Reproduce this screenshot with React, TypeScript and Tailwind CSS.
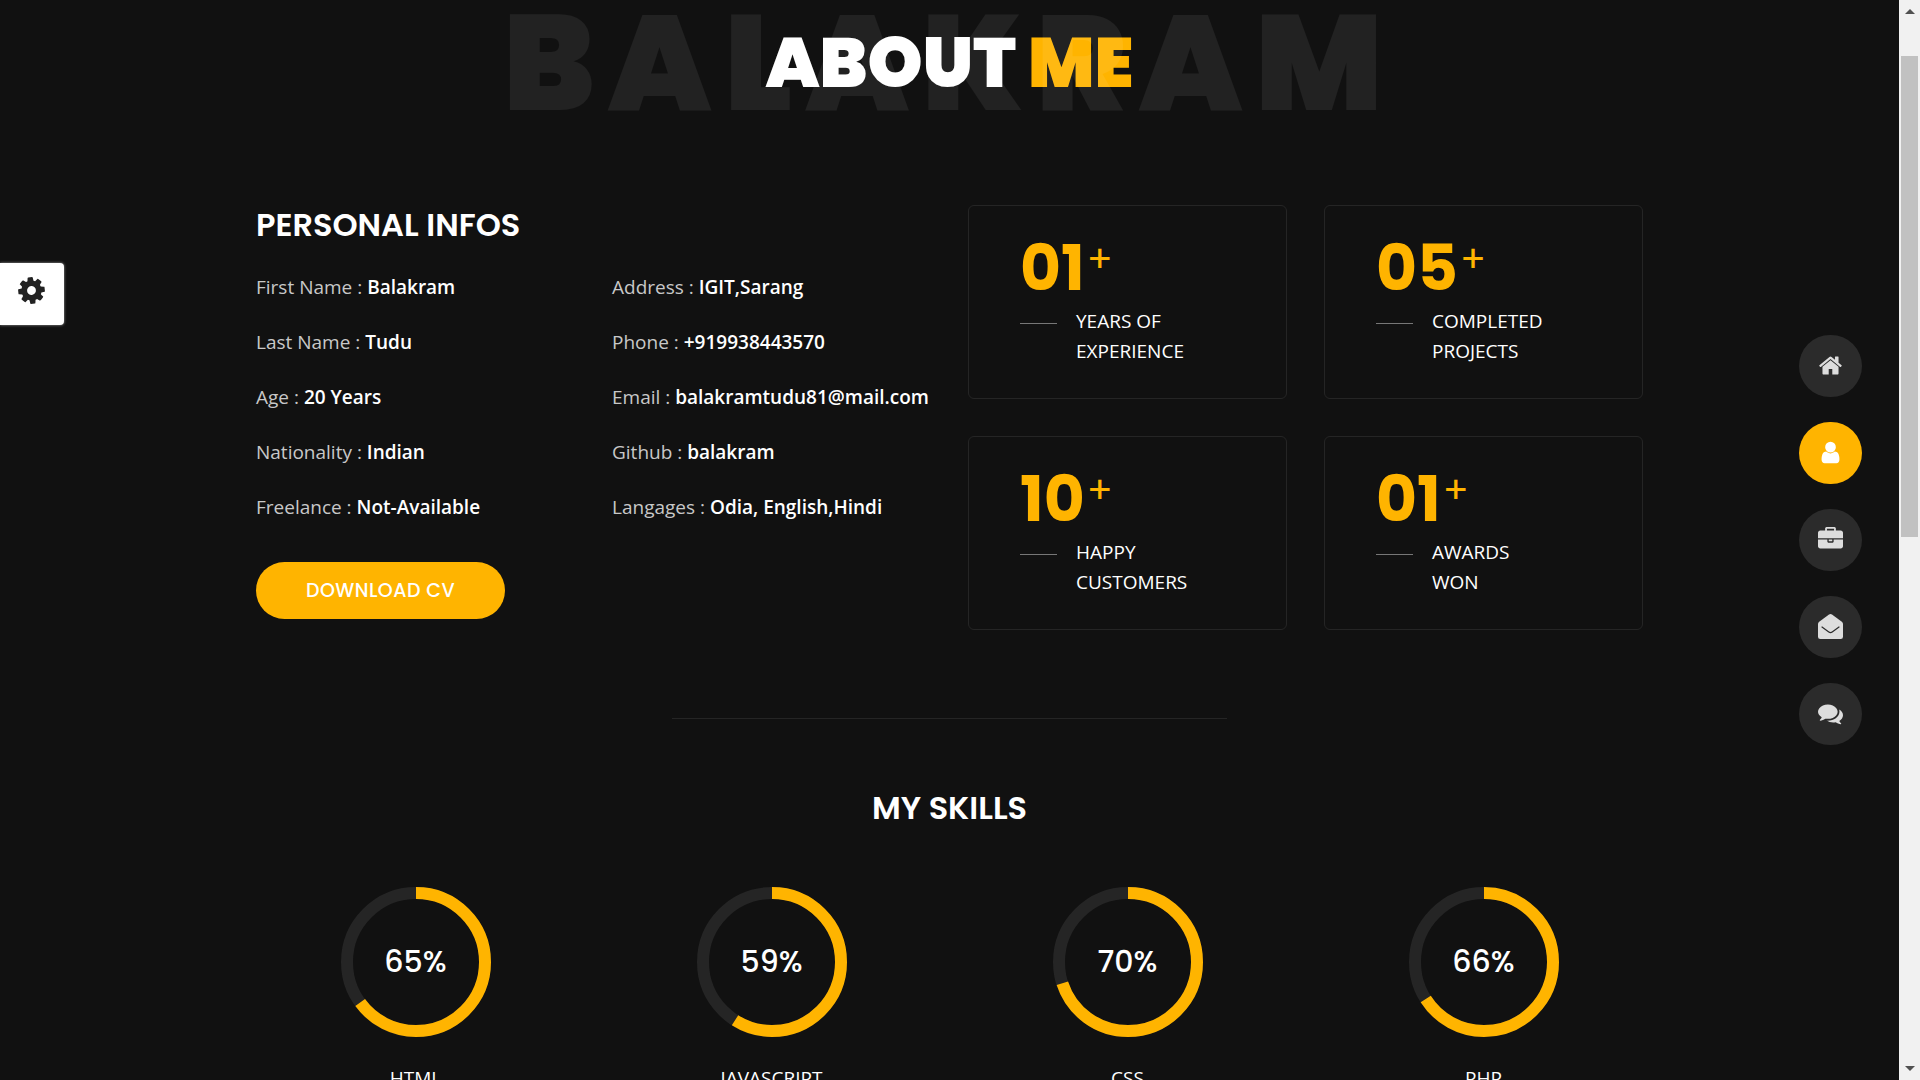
import React from "react";

const HEADING = "font-['Poppins','Inter',sans-serif]";

const ICONS = {
  home: "M1472 992v480q0 26-19 45t-45 19h-384v-384h-256v384h-384q-26 0-45-19t-19-45v-480q0-1 .5-3t.5-3l575-474 575 474q1 2 1 6zm223-69l-62 74q-8 9-21 11h-3q-13 0-21-7l-692-577-692 577q-12 8-24 7-13-2-21-11l-62-74q-8-10-7-23.5t11-21.5l719-599q32-26 76-26t76 26l244 204v-195q0-14 9-23t23-9h192q14 0 23 9t9 23v408l219 182q10 8 11 21.5t-7 23.5z",
  user: "M1536 1399q0 109-62.5 187t-150.5 78h-854q-88 0-150.5-78t-62.5-187q0-85 8.5-160.5t31.5-152 58.5-131 94-89 134.5-34.5q131 128 313 128t313-128q76 0 134.5 34.5t94 89 58.5 131 31.5 152 8.5 160.5zm-256-887q0 159-112.5 271.5t-271.5 112.5-271.5-112.5-112.5-271.5 112.5-271.5 271.5-112.5 271.5 112.5 112.5 271.5z",
  briefcase: "M640 256h512v-128h-512v128zm1152 640v480q0 66-47 113t-113 47h-1472q-66 0-113-47t-47-113v-480h672v160q0 26 19 45t45 19h320q26 0 45-19t19-45v-160h672zm-768 0v128h-256v-128h256zm768-480v384h-1792v-384q0-66 47-113t113-47h352v-160q0-40 28-68t68-28h576q40 0 68 28t28 68v160h352q66 0 113 47t47 113z",
  comments: "M1408 768q0 139-94 257t-256.500 186.500-353.500 68.500q-86 0-176-16-124 88-278 128-36 9-86 16h-3q-11 0-20.500-8t-11.500-21q-1-3-1-6.500t.5-6.500 2-6l2.500-5 3.500-5.500 4-5 4.500-5 4-4.500q5-6 23-25t26-29.500 22.500-29 25-38.500 20.500-44q-124-72-195-177t-71-224q0-139 94-257t256.500-186.500 353.500-68.500 353.500 68.500 256.500 186.500 94 257zm384 256q0 120-71 224.500t-195 176.500q10 24 20.500 44t25 38.500 22.500 29 26 29.500 23 25q1 1 4 4.500t4.500 5 4 5 3.500 5.500l2.500 5 2 6 .5 6.500-1 6.500q-3 14-13 22t-22 7q-50-7-86-16-154-40-278-128-90 16-176 16-271 0-472-132 58 4 88 4 161 0 309-45t264-129q125-92 192-212t67-254q0-77-23-152 129 71 204 178t75 230z",
  cog: "M1152 896q0-106-75-181t-181-75-181 75-75 181 75 181 181 75 181-75 75-181zm512-109v222q0 12-8 23t-20 13l-185 28q-19 54-39 91 35 50 107 138 10 12 10 25t-9 23q-27 37-99 108t-94 71q-12 0-26-9l-138-108q-44 23-91 38-16 136-29 186-7 28-36 28h-222q-14 0-24.500-8.500t-11.500-21.500l-28-184q-49-16-90-37l-141 107q-10 9-25 9-14 0-25-11-126-114-165-168-7-10-7-23 0-12 8-23 15-21 51-66.500t54-70.500q-27-50-41-99l-183-27q-13-2-21-12.500t-8-23.500v-222q0-12 8-23t19-13l186-28q14-46 39-92-40-57-107-138-10-12-10-24 0-10 9-23 26-36 98.500-107.500t94.500-71.500q13 0 26 10l138 107q44-23 91-38 16-136 29-186 7-28 36-28h222q14 0 24.500 8.500t11.500 21.500l28 184q49 16 90 37l142-107q9-9 24-9 13 0 25 10 129 119 165 170 7 8 7 22 0 12-8 23-15 21-51 66.500t-54 70.500q26 50 41 98l183 28q13 2 21 12.500t8 23.500z",
};

type IconName = keyof typeof ICONS | "envelope";

function Icon({ name, className }: { name: IconName; className: string }) {
  if (name === "envelope") {
    return (
      <svg viewBox="0 0 25 25" className={className} aria-hidden="true">
        <path
          fill="currentColor"
          d="M11 .6q1.500-1 3 0l9.800 7.200q1.200.9 1.200 2.200v12.700q0 2.300-2.300 2.300H2.300Q0 25 0 22.700V10q0-1.300 1.200-2.200z"
        />
        <path
          fill="none"
          stroke="#2b2b2b"
          strokeWidth="1.200"
          strokeLinecap="round"
          strokeLinejoin="round"
          d="M4 13l6.800 5q1.700 1.200 3.400 0L21 13"
        />
      </svg>
    );
  }
  return (
    <svg viewBox="0 0 1792 1792" className={className} fill="currentColor" aria-hidden="true">
      <path d={ICONS[name]} />
    </svg>
  );
}

const INFO_LEFT = [
  ["First Name", "Balakram"],
  ["Last Name", "Tudu"],
  ["Age", "20 Years"],
  ["Nationality", "Indian"],
  ["Freelance", "Not-Available"],
];

const INFO_RIGHT = [
  ["Address", "IGIT,Sarang"],
  ["Phone", "+919938443570"],
  ["Email", "balakramtudu81@mail.com"],
  ["Github", "balakram"],
  ["Langages", "Odia, English,Hindi"],
];

const STATS = [
  { value: "01", lines: ["Years of", "Experience"] },
  { value: "05", lines: ["Completed", "Projects"] },
  { value: "10", lines: ["Happy", "Customers"] },
  { value: "01", lines: ["Awards", "Won"] },
];

const SKILLS = [
  { name: "HTML", percent: 65 },
  { name: "JavaScript", percent: 59 },
  { name: "CSS", percent: 70 },
  { name: "PHP", percent: 66 },
];

const NAV: { label: string; icon: IconName; active?: boolean }[] = [
  { label: "Home", icon: "home" },
  { label: "About", icon: "user", active: true },
  { label: "Portfolio", icon: "briefcase" },
  { label: "Contact", icon: "envelope" },
  { label: "Blog", icon: "comments" },
];

function InfoList({ items }: { items: string[][] }) {
  return (
    <ul className="flex flex-col gap-[25px]">
      {items.map(([label, value]) => (
        <li key={label} className="whitespace-nowrap text-[19px] leading-[30px]">
          <span className="text-[#c8c8c8]">{label} : </span>
          <span className="font-semibold text-white">{value}</span>
        </li>
      ))}
    </ul>
  );
}

function StatCard({ value, lines }: { value: string; lines: string[] }) {
  return (
    <div className="rounded-md border border-[#252525] px-[51px] pt-[25px] pb-8">
      <div className={`${HEADING} flex items-start gap-[2px] text-[#ffb400]`}>
        <span className="text-[63px] leading-[75px] font-bold">{value}</span>
        <span className="text-[38px] leading-[55px] font-normal">+</span>
      </div>
      <div className="flex gap-[19px]">
        <span className="mt-[17px] h-px w-[37px] bg-[#777]" />
        <p className="text-[19px] leading-[30px] text-white uppercase">
          {lines[0]}
          <br />
          {lines[1]}
        </p>
      </div>
    </div>
  );
}

function SkillRing({ name, percent }: { name: string; percent: number }) {
  return (
    <div className="flex flex-col items-center gap-[26px]">
      <div className="grid place-items-center">
        <svg viewBox="0 0 150 150" className="col-start-1 row-start-1 size-[150px] -rotate-90" fill="none" strokeWidth="12" aria-hidden="true">
          <circle cx="75" cy="75" r="69" stroke="#252525" />
          <circle cx="75" cy="75" r="69" stroke="#ffb400" pathLength="100" strokeDasharray={`${percent} 100`} />
        </svg>
        <span className={`${HEADING} col-start-1 row-start-1 pb-[2px] text-[30px] font-medium text-white`}>{percent}%</span>
      </div>
      <h3 className="text-[19px] leading-[30px] text-white uppercase">{name}</h3>
    </div>
  );
}

export default function App() {
  return (
    <div className="flex h-screen overflow-hidden bg-[#111] font-['Open_Sans',sans-serif] text-white">
      <main className="h-full min-w-0 flex-1 overflow-hidden">
        <header className={`${HEADING} grid place-items-center uppercase`}>
          <h1 className="col-start-1 row-start-1 text-[70px] leading-none font-black">
            About <span className="text-[#ffb400]">Me</span>
          </h1>
          <span className="col-start-1 row-start-1 text-[134px] leading-[126px] font-black tracking-[13px] text-white/7" aria-hidden="true">
            Balakram
          </span>
        </header>

        <section className="mx-auto mt-[79px] grid w-full max-w-[1387px] grid-cols-2 gap-[37px]">
          <div>
            <h2 className={`${HEADING} text-[32px] leading-[40px] font-semibold`}>PERSONAL INFOS</h2>
            <div className="mt-[27px] grid grid-cols-2 gap-[37px]">
              <InfoList items={INFO_LEFT} />
              <InfoList items={INFO_RIGHT} />
            </div>
            <button
              type="button"
              className={`${HEADING} mt-10 rounded-full bg-[#ffb400] px-[50px] py-3.5 text-[19px] leading-[29px] font-medium tracking-wide text-white`}
            >
              DOWNLOAD CV
            </button>
          </div>
          <div className="grid grid-cols-2 gap-[37px]">
            {STATS.map((stat) => (
              <StatCard key={stat.lines[0]} {...stat} />
            ))}
          </div>
        </section>

        <hr className="mx-auto mt-[88px] w-2/5 max-w-[555px] border-[#252525]" />

        <section className="mx-auto mt-[69px] w-full max-w-[1387px]">
          <h2 className={`${HEADING} text-center text-[32px] leading-[40px] font-semibold`}>MY SKILLS</h2>
          <div className="mt-[59px] grid grid-cols-4 gap-[37px]">
            {SKILLS.map((skill) => (
              <SkillRing key={skill.name} {...skill} />
            ))}
          </div>
        </section>
      </main>

      <button
        type="button"
        aria-label="Settings"
        className="fixed top-[263px] left-0 flex h-[62px] w-16 items-start rounded-r bg-white pt-3 pl-4 text-[#222] shadow-[0_0_3px_rgba(255,255,255,0.6)]"
      >
        <Icon name="cog" className="size-[31px] -rotate-6" />
      </button>

      <nav className="fixed inset-y-0 right-[58px] flex flex-col justify-center gap-[25px]">
        {NAV.map(({ label, icon, active }) => (
          <a
            key={label}
            href="#"
            aria-label={label}
            className={`flex h-[62px] w-[63px] items-center justify-center rounded-full pb-[2px] ${active ? "bg-[#ffb400] text-white" : "bg-[#2b2b2b] text-[#ddd]"}`}
          >
            <Icon name={icon} className="size-[25px]" />
          </a>
        ))}
      </nav>

      <div className="flex w-[21px] flex-col items-center justify-between bg-[#f1f1f1] py-[9px]" aria-hidden="true">
        <svg viewBox="0 0 10 5" className="h-[5px] w-[10px]" fill="#505050">
          <path d="M5 0l5 5H0z" />
        </svg>
        <div className="mt-[42px] mb-auto h-[481px] w-[17px] bg-[#c1c1c1]" />
        <svg viewBox="0 0 10 5" className="h-[5px] w-[10px]" fill="#505050">
          <path d="M5 5l5-5H0z" />
        </svg>
      </div>
    </div>
  );
}
